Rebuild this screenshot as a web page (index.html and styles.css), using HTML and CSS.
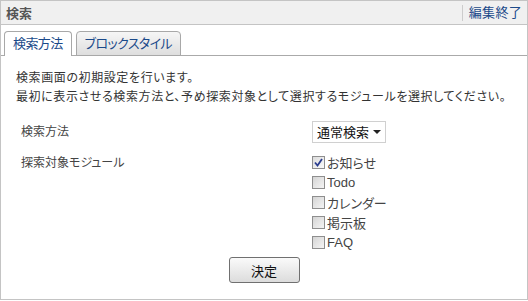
FILE: index.html
```html
<!DOCTYPE html>
<html lang="ja">
<head>
    <meta charset="UTF-8">
    <link rel="stylesheet" href="styles.css">
    <title>検索</title>
</head>
<body>

<div class="block">
    <div class="block-head">
        <span class="block-title">検索</span>
        <a class="block-edit" href="#">編集終了</a>
    </div>

    <div class="tabs">
        <div class="tab active">検索方法</div>
        <div class="tab">ブロックスタイル</div>
    </div>

    <div class="block-body">
        <p class="desc">検索画面の初期設定を行います。<br>最初に表示させる検索方法と、予め探索対象として選択するモジュールを選択してください。</p>

        <div class="form">
            <div class="label label-select">検索方法</div>
            <div>
                <span class="select-wrap">
                    <select class="select">
                        <option>通常検索</option>
                    </select>
                </span>
            </div>

            <div class="label">探索対象モジュール</div>
            <div class="modules">
                <label class="module"><span class="check checked"><svg width="9" height="9" viewBox="0 0 9 9"><path d="M1 4.5 L3.5 7.5 L8 1" fill="none" stroke="#2b3d8f" stroke-width="1.8"/></svg></span>お知らせ</label>
                <label class="module"><span class="check"></span>Todo</label>
                <label class="module"><span class="check"></span>カレンダー</label>
                <label class="module"><span class="check"></span>掲示板</label>
                <label class="module"><span class="check"></span>FAQ</label>
            </div>
        </div>

        <div class="actions">
            <button class="button">決定</button>
        </div>
    </div>
</div>

</body>
</html>
```

FILE: styles.css
```css
body{
    margin: 0;
    font-family: "Liberation Sans", "Noto Sans CJK JP", sans-serif;
    font-feature-settings: "palt";
    font-size: 12px;
    color: #333;
}
.block{
    box-sizing: border-box;
    width: 528px;
    height: 300px;
    border: 1px solid #c4c4c4;
    background-color: #fff;
}
.block-head{
    display: flex;
    justify-content: space-between;
    align-items: center;
    height: 23px;
    background-color: #f0f0f0;
    border-bottom: 1px solid #c4c4c4;
}
.block-title{
    padding-left: 5px;
    font-size: 13px;
    font-weight: bold;
    color: #555;
}
.block-edit{
    border-left: 1px solid #ccc;
    padding: 0 5px 0 6px;
    line-height: 16px;
    font-size: 13px;
    letter-spacing: 0.3px;
    color: #1b4a8a;
    text-decoration: none;
}
.tabs{
    display: flex;
    gap: 4px;
    padding: 6px 0 0 3px;
    border-bottom: 1px solid #aaa;
}
.tab{
    height: 23px;
    line-height: 23px;
    padding: 0 8px;
    margin-bottom: -1px;
    border: 1px solid #a8a8a8;
    border-radius: 4px 4px 0 0;
    font-size: 13px;
    letter-spacing: -0.6px;
    color: #1b4a8a;
    background: linear-gradient(#f6f6f6, #dedede);
}
.tab.active{
    height: 24px;
    background: #fff;
    border-bottom: none;
}
.block-body{
    padding: 13px 0 0 15px;
}
.desc{
    margin: 0;
    line-height: 19px;
    letter-spacing: 0.6px;
}
.form{
    display: grid;
    grid-template-columns: 291px auto;
    row-gap: 9px;
    margin: 14px 0 0 5px;
    color: #444;
}
.label{
    padding-top: 1px;
}
.label-select{
    padding-top: 0;
    line-height: 22px;
}
.select-wrap{
    position: relative;
    display: inline-block;
}
.select{
    appearance: none;
    width: 74px;
    height: 22px;
    padding: 0 0 0 4px;
    border: 1px solid #d0d0d0;
    border-radius: 0;
    background: #fff;
    font-family: inherit;
    font-size: 13px;
    color: #111;
}
.select-wrap::after{
    content: "";
    position: absolute;
    right: 5px;
    top: 9px;
    border-left: 4px solid transparent;
    border-right: 4px solid transparent;
    border-top: 4px solid #222;
    pointer-events: none;
}
.modules{
    display: flex;
    flex-direction: column;
}
.module{
    display: flex;
    align-items: center;
    gap: 2px;
    height: 20px;
    font-size: 13px;
    color: #444;
}
.check{
    box-sizing: border-box;
    display: flex;
    align-items: center;
    justify-content: center;
    width: 13px;
    height: 13px;
    border: 1px solid #8e8e8e;
    background: linear-gradient(135deg, #d4d4d4, #f4f4f4);
}
.check.checked{
    background: linear-gradient(135deg, #dcdcdc, #fafafa);
}
.actions{
    display: flex;
    justify-content: center;
    margin: 5px 0 0 -15px;
}
.button{
    width: 71px;
    height: 26px;
    border: 1px solid #707070;
    border-radius: 3px;
    background: linear-gradient(#fafafa, #dcdcdc);
    font-family: inherit;
    font-size: 13px;
    color: #111;
}
```
